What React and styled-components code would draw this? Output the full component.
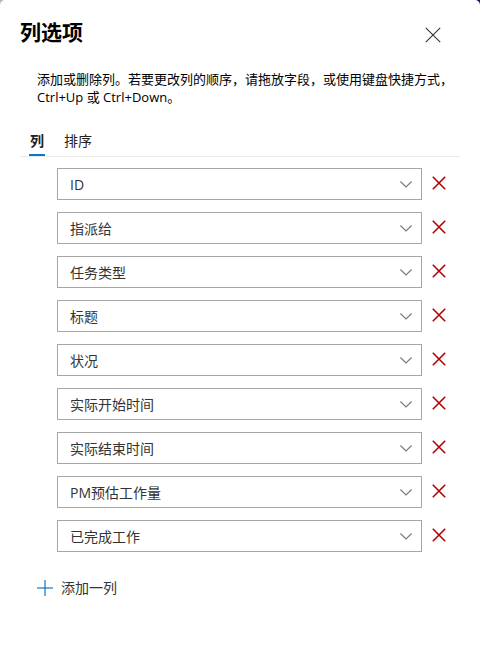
import React, { useState } from "react";
import styled, { createGlobalStyle } from "styled-components";

const fields = [
  "ID",
  "指派给",
  "任务类型",
  "标题",
  "状况",
  "实际开始时间",
  "实际结束时间",
  "PM预估工作量",
  "已完成工作",
];

const GlobalStyle = createGlobalStyle`
  *, *::before, *::after { box-sizing: border-box; }
  body {
    margin: 0;
    background: linear-gradient(to right, #b4b4b4 50%, #1c0f5c 50%);
    color: #000;
    font-family: "Open Sans", "Noto Sans CJK SC", sans-serif;
    font-size: 14px;
    line-height: 20px;
  }
  button, select { font: inherit; color: inherit; }
`;

const Panel = styled.main`
  display: flex;
  flex-direction: column;
  min-height: 100vh;
  padding: 16px 20px 40px;
  border-radius: 5px 5px 0 0;
  background: #fff;
`;

const Header = styled.header`
  display: flex;
  align-items: flex-start;
  justify-content: space-between;
`;

const Title = styled.h1`
  margin: 0;
  font-size: 21px;
  line-height: 32px;
  font-weight: 700;
`;

const IconButton = styled.button`
  display: flex;
  flex: none;
  align-items: center;
  justify-content: center;
  width: ${(p) => p.$size}px;
  height: ${(p) => p.$size}px;
  padding: 0;
  border: 0;
  background: none;
  color: ${(p) => p.$color};
  cursor: pointer;
`;

const CloseButton = styled(IconButton)`
  margin: 3px 11px 0 0;
`;

const RemoveButton = styled(IconButton)`
  margin-top: 5px;
`;

const Description = styled.p`
  margin: 19px 0 0;
  padding-left: 17px;
  font-size: 13px;
  line-height: 18px;
`;

const Tabs = styled.div`
  display: flex;
  gap: 18px;
  margin-top: 25px;
  padding-left: 9px;
  border-bottom: 1px solid #eaeaea;
`;

const Tab = styled.button`
  height: 25px;
  padding: 0 1px 4px;
  border: 0;
  border-bottom: 2px solid ${(p) => (p.$active ? "#0078d4" : "transparent")};
  background: none;
  color: #222;
  font-weight: ${(p) => (p.$active ? 700 : 400)};
  cursor: pointer;
`;

const FieldList = styled.ul`
  display: flex;
  flex-direction: column;
  gap: 12px;
  margin: 11px 0 0;
  padding: 0 11px 0 37px;
  list-style: none;
`;

const FieldRow = styled.li`
  display: flex;
  gap: 7px;
`;

const SelectBox = styled.div`
  display: grid;
  flex: 1;
  align-items: center;
  min-width: 0;

  > * { grid-area: 1 / 1; }
  > svg {
    justify-self: end;
    margin-right: 10px;
    pointer-events: none;
  }
`;

const Select = styled.select`
  appearance: none;
  width: 100%;
  height: 32px;
  padding: 2px 32px 0 12px;
  border: 1px solid #a6a6a6;
  border-radius: 0;
  background: #fff;
  color: #333;
`;

const AddButton = styled.button`
  display: flex;
  align-items: center;
  align-self: flex-start;
  gap: 8px;
  margin: 26px 0 0 17px;
  padding: 0;
  border: 0;
  background: none;
  color: #333;
  cursor: pointer;
`;

const Cross = ({ size, weight }) => (
  <svg width={size} height={size} viewBox={`0 0 ${size} ${size}`} fill="none" stroke="currentColor" strokeWidth={weight} aria-hidden="true">
    <path d={`M.8 .8 ${size - 0.8} ${size - 0.8}M${size - 0.8} .8 .8 ${size - 0.8}`} />
  </svg>
);

const Chevron = () => (
  <svg width="12" height="7" viewBox="0 0 12 7" fill="none" stroke="#777" strokeWidth="1.1" aria-hidden="true">
    <path d="M.4 .5 6 6 11.6 .5" />
  </svg>
);

const Plus = () => (
  <svg width="16" height="16" viewBox="0 0 16 16" fill="none" strokeWidth="2" stroke="#0067b8" strokeOpacity=".55" aria-hidden="true">
    <path d="M8 0v16" />
    <path d="M0 8h16" />
  </svg>
);

export default function App() {
  const [tab, setTab] = useState("列");
  return (
    <>
      <GlobalStyle />
      <Panel>
        <Header>
          <Title>列选项</Title>
          <CloseButton type="button" aria-label="关闭" $size={32} $color="#333">
            <Cross size={16} weight={1.1} />
          </CloseButton>
        </Header>
        <Description>
          添加或删除列。若要更改列的顺序，请拖放字段，或使用键盘快捷方式，Ctrl+Up 或 Ctrl+Down。
        </Description>
        <Tabs role="tablist">
          {["列", "排序"].map((name) => (
            <Tab
              key={name}
              type="button"
              role="tab"
              aria-selected={tab === name}
              $active={tab === name}
              onClick={() => setTab(name)}
            >
              {name}
            </Tab>
          ))}
        </Tabs>
        <FieldList>
          {fields.map((field) => (
            <FieldRow key={field}>
              <SelectBox>
                <Select aria-label={`列：${field}`} defaultValue={field}>
                  {fields.map((name) => (
                    <option key={name}>{name}</option>
                  ))}
                </Select>
                <Chevron />
              </SelectBox>
              <RemoveButton type="button" aria-label={`删除${field}`} $size={20} $color="#b40000">
                <Cross size={14} weight={1.6} />
              </RemoveButton>
            </FieldRow>
          ))}
        </FieldList>
        <AddButton type="button">
          <Plus />
          添加一列
        </AddButton>
      </Panel>
    </>
  );
}
